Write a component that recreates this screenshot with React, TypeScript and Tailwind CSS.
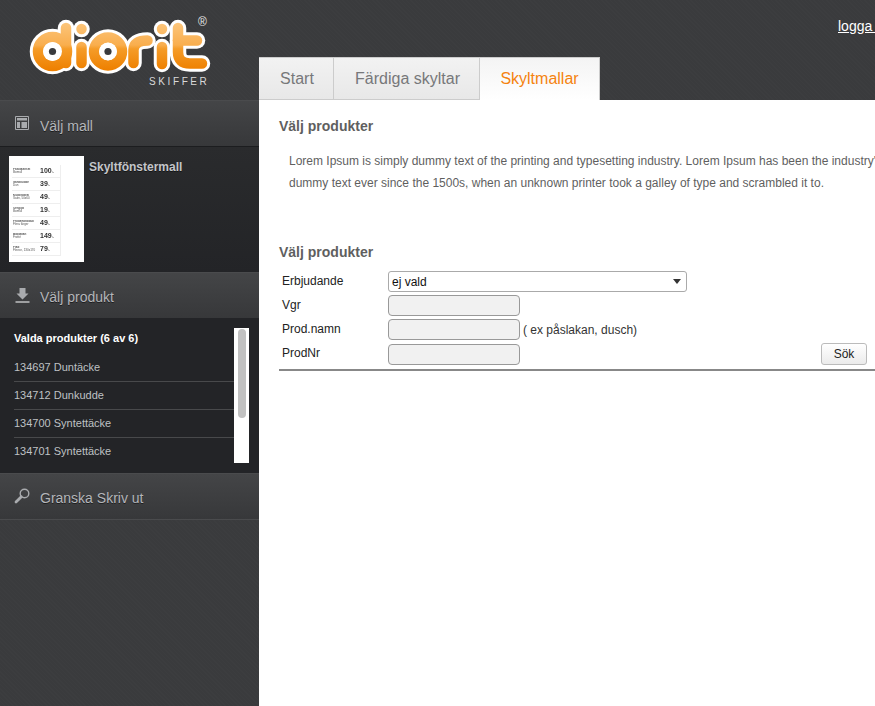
const texture =
  'bg-[#3a3b3d] bg-[repeating-linear-gradient(45deg,rgba(255,255,255,0.01)_0px,rgba(255,255,255,0.01)_1px,transparent_1px,transparent_3px)]';

const thumbRows = [
  ['Påslakanset', 'Bomull', '100'],
  ['Sänkkudde', 'Dun', '39'],
  ['Kuddfodral', 'Satin, 50x60', '49'],
  ['Örngott', 'Bomull', '19'],
  ['Frottéhandduk', 'Flera färger', '49'],
  ['Badlakan', 'Frotté', '149'],
  ['Pläd', 'Fleece, 130x170', '79'],
];

const products = ['134697 Duntäcke', '134712 Dunkudde', '134700 Syntettäcke', '134701 Syntettäcke'];

function Logo() {
  const letters = (
    <>
      <circle cx="52.5" cy="51.5" r="14.5" />
      <circle cx="108" cy="51.5" r="14" />
      <path d="M66 28V63" />
      <path d="M81.5 29V29.1" />
      <path d="M81.5 47V63" />
      <path d="M133.5 63V50Q133.5 40.5 147.5 40.5" />
      <path d="M162 29V29.1" />
      <path d="M162 47V64" />
      <path d="M178 28V52Q178 63.5 190 63.5H202" />
      <path d="M178 40.5H197" />
    </>
  );

  return (
    <svg width="259" height="100" viewBox="0 0 259 100" className="block">
      <defs>
        <linearGradient id="logoFill" gradientUnits="userSpaceOnUse" x1="0" y1="22" x2="0" y2="70">
          <stop offset="0" stopColor="#fcc67c" />
          <stop offset="0.48" stopColor="#f9ae4e" />
          <stop offset="0.56" stopColor="#f59c28" />
          <stop offset="1" stopColor="#ee8000" />
        </linearGradient>
      </defs>
      <g fill="none" stroke="#fff" strokeWidth="16.5" strokeLinecap="round" strokeLinejoin="round">
        {letters}
      </g>
      <g fill="none" stroke="url(#logoFill)" strokeWidth="10.5" strokeLinecap="round" strokeLinejoin="round">
        {letters}
      </g>
      <circle cx="52.5" cy="51.5" r="9.5" fill="#fff" />
      <circle cx="108" cy="51.5" r="9" fill="#fff" />
      <circle cx="52.5" cy="51.5" r="3.6" fill="#3a3b3d" />
      <circle cx="108" cy="51.5" r="3.6" fill="#3a3b3d" />
      <text x="202.5" y="26" textAnchor="middle" fontSize="12" fill="#e8e8e8">
        ®
      </text>
    </svg>
  );
}

function TemplateIcon() {
  return (
    <svg width="15" height="15" viewBox="0 0 15 15" className="shrink-0">
      <path d="M.5.5h13v13H.5z" fill="none" stroke="#a9abae" />
      <path d="M2 2h10v2.5H2zM2 6h3v6H2zM6.5 6H12v6H6.5z" fill="#a9abae" />
    </svg>
  );
}

function DownloadIcon() {
  return (
    <svg width="15" height="16" viewBox="0 0 15 16" className="shrink-0">
      <path d="M4.5 1h6v5.5h3l-6 6-6-6h3z" fill="#a9abae" />
      <path d="M.5 15h14" stroke="#c9cacc" strokeWidth="1.4" />
    </svg>
  );
}

function SearchIcon() {
  return (
    <svg width="16" height="16" viewBox="0 0 16 16" className="shrink-0 -ml-px">
      <circle cx="10.5" cy="5.5" r="4.3" fill="none" stroke="#a9abae" strokeWidth="1.4" />
      <path d="M7.3 8.7L2 14" stroke="#a9abae" strokeWidth="2.8" strokeLinecap="round" />
    </svg>
  );
}

function SectionHead({ icon, label, drop }: { icon: React.ReactNode; label: string; drop?: boolean }) {
  return (
    <div className="h-[46px] shrink-0 flex items-center pl-[15px] pt-[3px] gap-[10px] border-t border-[#4a4b4d] bg-gradient-to-b from-[#444547] to-[#37383a] text-[14px] text-[#b4b6ba]">
      <div className="mb-[4px] flex">{icon}</div>
      <span className={`[text-shadow:0_1px_0_rgba(0,0,0,0.5)] ${drop ? 'mt-[2px]' : ''}`}>{label}</span>
    </div>
  );
}

function Sidebar() {
  return (
    <aside className="w-[259px] h-full shrink-0 flex flex-col">
      <div className="relative h-[100px] shrink-0">
        <Logo />
        <span className="absolute left-[149px] top-[76px] text-[10px] leading-[12px] tracking-[2.6px] text-[#d9d9d9]">
          SKIFFER
        </span>
      </div>

      <SectionHead icon={<TemplateIcon />} label="Välj mall" drop />

      <div className="h-[126px] shrink-0 flex items-start gap-[5px] pt-[9px] pl-[9px] bg-gradient-to-b from-[#2a2b2d] to-[#232427] border-t border-[#1c1d1f]">
        <div className="w-[75px] h-[106px] bg-white shrink-0 pl-[3px] pt-[9px]">
          {thumbRows.map(([name, sub, price]) => (
            <div key={name} className="flex w-[49px] h-[13px] pl-[1px] border-b border-r border-[#eeeeee] items-center text-[#555] blur-[0.4px]">
              <div className="w-[27px] leading-[3px] text-[3px] whitespace-nowrap overflow-hidden">
                <div className="font-bold">{name}</div>
                <div>{sub}</div>
              </div>
              <div className="font-bold text-[7px] leading-[7px] whitespace-nowrap text-[#333]">
                {price}
                <span className="text-[3px]">:-</span>
              </div>
            </div>
          ))}
        </div>
        <div className="mt-[4px] text-[12px] font-bold leading-[14px] text-[#c4c6ca] [text-shadow:0_1px_0_rgba(0,0,0,0.5)]">
          Skyltfönstermall
        </div>
      </div>

      <SectionHead icon={<DownloadIcon />} label="Välj produkt" />

      <div className="h-[155px] shrink-0 flex pt-[10px] pl-[14px] pr-[10px] bg-[#232427]">
        <div className="flex-1 min-w-0">
          <div className="h-[26px] text-[11px] font-bold leading-[21px] text-white">Valda produkter (6 av 6)</div>
          {products.map((product, i) => (
            <div
              key={product}
              className={`h-[28px] text-[11px] leading-[26px] text-[#bfc1c4] ${i < 3 ? 'border-b border-[#48494b]' : ''}`}
            >
              {product}
            </div>
          ))}
        </div>
        <div className="w-[15px] h-[135px] bg-white pt-[1px] pl-[4px]">
          <div className="w-[8px] h-[89px] rounded-[4px] bg-[#c1c1c1]" />
        </div>
      </div>

      <div className="border-b border-[#4a4b4d]">
        <SectionHead icon={<SearchIcon />} label="Granska Skriv ut" />
      </div>
      <div className="flex-1" />
    </aside>
  );
}

function Tabs() {
  return (
    <div className="flex h-[43px] text-[16px] leading-[41px]">
      <div className="w-[75px] pl-[2px] text-center text-[#77787a] bg-gradient-to-b from-[#f2f2f2] to-[#e8e8e8] border-t border-r border-b border-[#cccccc]">
        Start
      </div>
      <div className="w-[146px] pl-[2px] text-center text-[#77787a] bg-gradient-to-b from-[#f2f2f2] to-[#e8e8e8] border-t border-r border-b border-[#cccccc]">
        Färdiga skyltar
      </div>
      <div className="w-[120px] text-center text-[#f5830f] bg-gradient-to-b from-[#f4f4f4] to-white border-t border-r border-[#cccccc]">
        Skyltmallar
      </div>
    </div>
  );
}

function FormRow({ label, children }: { label: string; children: React.ReactNode }) {
  return (
    <div className="flex items-center">
      <div className="w-[109px] pl-[3px] pb-[2px] text-[12px] text-[#222]">{label}</div>
      {children}
    </div>
  );
}

const inputClass = 'w-[132px] h-[21px] rounded-[4px] border border-[#999] bg-[#f1f1f1]';

function Main() {
  return (
    <main className="flex-1 min-w-0 h-full flex flex-col">
      <div className="h-[57px] shrink-0 pl-[579px] pt-[18px] text-[14px] leading-[16px] text-white whitespace-nowrap">
        <span className="underline">logga ut</span>
      </div>
      <Tabs />
      <div className="flex-1 bg-white pl-[20px] pt-[18px] whitespace-nowrap">
        <h2 className="text-[14px] leading-[16px] font-bold text-[#5f5f5f]">Välj produkter</h2>
        <p className="mt-[16px] pl-[10px] text-[12px] leading-[22px] text-[#5f5f5f]">
          Lorem Ipsum is simply dummy text of the printing and typesetting industry. Lorem Ipsum has been the industry's standard
          <br />
          dummy text ever since the 1500s, when an unknown printer took a galley of type and scrambled it to.
        </p>
        <h2 className="mt-[50px] text-[14px] leading-[16px] font-bold text-[#5f5f5f]">Välj produkter</h2>

        <div className="mt-[11px] w-[596px] h-[100px] border-b-2 border-[#888888] flex flex-col gap-[3px]">
          <FormRow label="Erbjudande">
            <div className="relative w-[299px] h-[21px]">
              <select className="block w-full h-full appearance-none rounded-[3px] border border-[#aaa] bg-white pl-[3px] text-[12px] text-[#111]">
                <option>ej vald</option>
              </select>
              <span className="absolute right-[6px] top-[8px] border-x-[4px] border-t-[5px] border-x-transparent border-t-[#333]" />
            </div>
          </FormRow>
          <FormRow label="Vgr">
            <input className={inputClass} />
          </FormRow>
          <FormRow label="Prod.namn">
            <input className={inputClass} />
            <span className="ml-[3px] text-[12px] text-[#333]">( ex påslakan, dusch)</span>
          </FormRow>
          <FormRow label="ProdNr">
            <input className={inputClass} />
            <button className="ml-auto mr-[8px] w-[46px] h-[22px] rounded-[3px] border border-[#bbb] bg-gradient-to-b from-white to-[#ebebeb] text-[12px] text-[#222]">
              Sök
            </button>
          </FormRow>
        </div>
      </div>
    </main>
  );
}

export default function App() {
  return (
    <div className={`w-[875px] h-[706px] overflow-hidden flex font-['Liberation_Sans',Arial,sans-serif] ${texture}`}>
      <Sidebar />
      <Main />
    </div>
  );
}
